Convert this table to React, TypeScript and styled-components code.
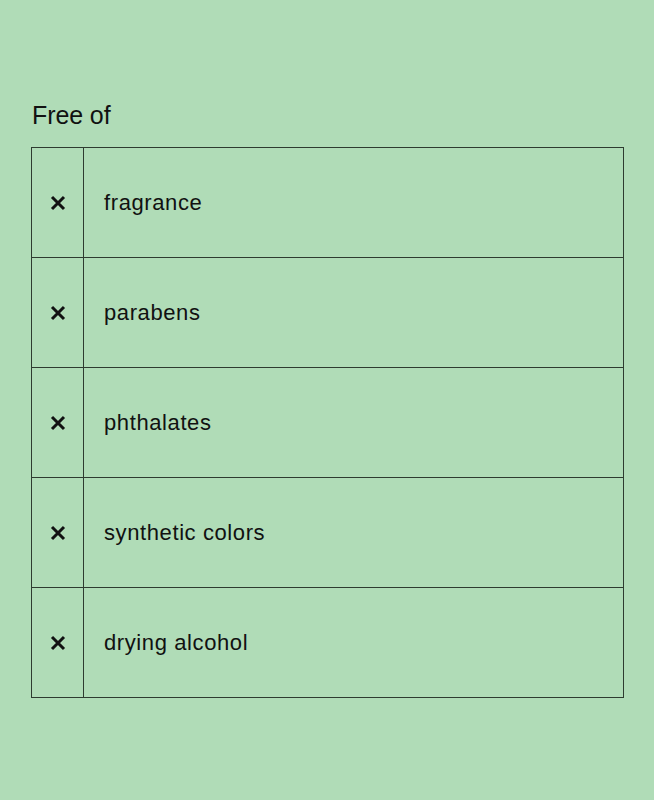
import React from "react";
import styled, { createGlobalStyle } from "styled-components";

const items = ["fragrance", "parabens", "phthalates", "synthetic colors", "drying alcohol"];

const Global = createGlobalStyle`
  html, body {
    margin: 0;
    background: #b0dcb7;
  }
  body {
    font-family: "Liberation Sans", Arial, sans-serif;
    color: #111;
  }
`;

const Page = styled.main`
  min-height: 800px;
  padding: 100px 30px 0 31px;
  box-sizing: border-box;
`;

const Title = styled.h2`
  margin: 0 0 17px 1px;
  font-size: 25px;
  line-height: 30px;
  font-weight: 400;
  letter-spacing: -0.1px;
`;

const Table = styled.ul`
  list-style: none;
  margin: 0;
  padding: 0;
  border: 1px solid #2e3b30;
`;

const Row = styled.li`
  display: flex;
  height: 109px;
  & + & {
    border-top: 1px solid #2e3b30;
  }
`;

const Mark = styled.div`
  width: 51px;
  flex: none;
  display: flex;
  align-items: center;
  justify-content: center;
  border-right: 1px solid #2e3b30;
`;

const Label = styled.div`
  display: flex;
  align-items: center;
  padding-left: 20px;
  font-size: 22px;
  letter-spacing: 0.6px;
`;

const Cross = () => (
  <svg width="16" height="16" viewBox="0 0 16 16">
    <path d="M2 2L14 14M14 2L2 14" stroke="#111" strokeWidth="3" strokeLinecap="butt" />
  </svg>
);

export default function App() {
  return (
    <>
      <Global />
      <Page>
        <Title>Free of</Title>
        <Table>
          {items.map((item) => (
            <Row key={item}>
              <Mark>
                <Cross />
              </Mark>
              <Label>{item}</Label>
            </Row>
          ))}
        </Table>
      </Page>
    </>
  );
}
